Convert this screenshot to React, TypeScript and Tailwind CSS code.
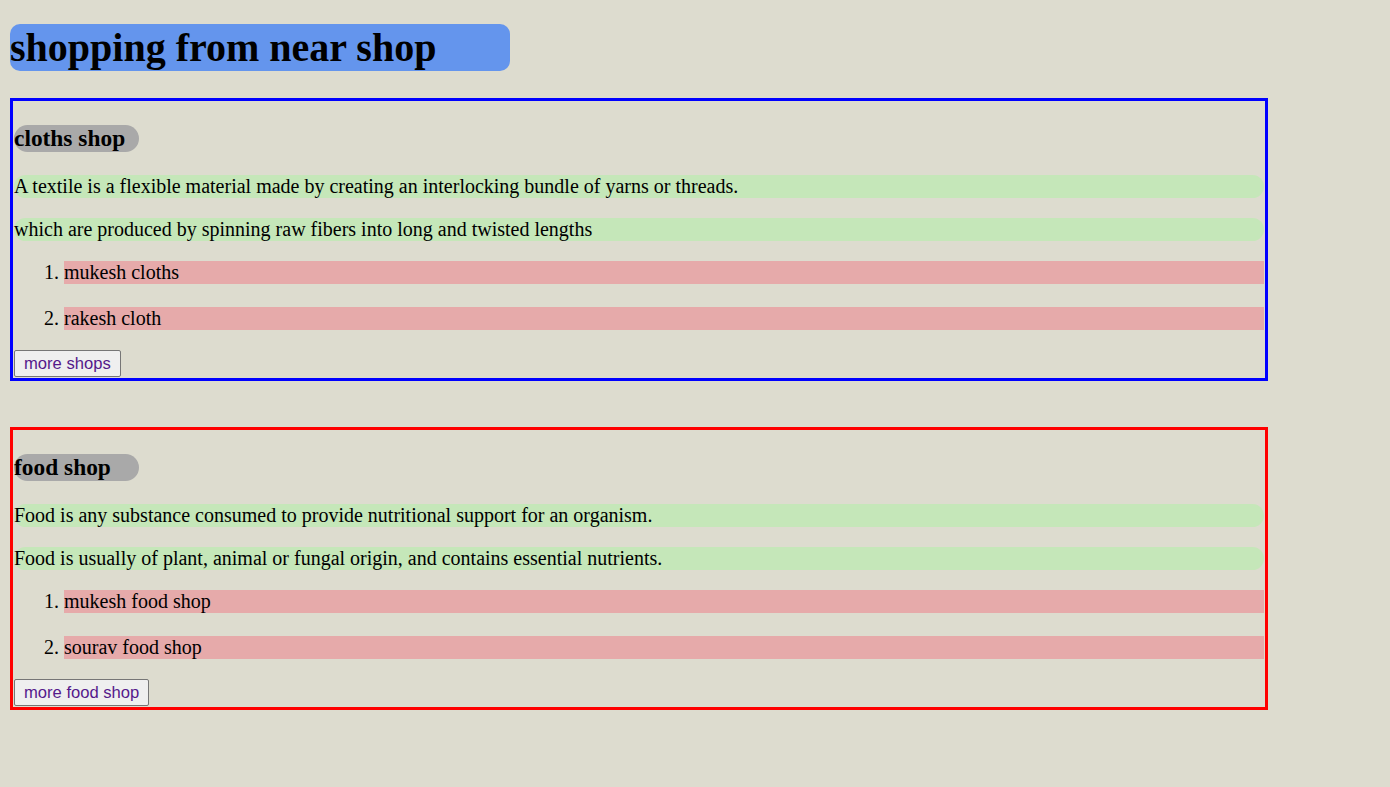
import { FC } from "react";

type TShop = {
  title: string;
  lines: string[];
  shops: string[];
  more: string;
  border: string;
};

const shops: TShop[] = [
  {
    title: "cloths shop",
    lines: [
      "A textile is a flexible material made by creating an interlocking bundle of yarns or threads.",
      "which are produced by spinning raw fibers into long and twisted lengths",
    ],
    shops: ["mukesh cloths", "rakesh cloth"],
    more: "more shops",
    border: "border-[#0000ff]",
  },
  {
    title: "food shop",
    lines: [
      "Food is any substance consumed to provide nutritional support for an organism.",
      "Food is usually of plant, animal or fungal origin, and contains essential nutrients.",
    ],
    shops: ["mukesh food shop", "sourav food shop"],
    more: "more food shop",
    border: "border-[#ff0000]",
  },
];

const ShopBox: FC<{ shop: TShop; first?: boolean }> = ({ shop, first }) => {
  return (
    <section
      className={`w-[1258px] border-[3px] ${shop.border} p-[1px] flex flex-col ${
        first ? "" : "mt-[46px]"
      }`}
    >
      <h3 className="mt-[23px] w-[125px] h-[27px] rounded-full bg-[#a9a9a9] text-[23.4px] leading-[27px] font-bold">
        {shop.title}
      </h3>

      <p className="mt-[23px] h-[23px] leading-[23px] rounded-full bg-[#c5e7b9]">
        {shop.lines[0]}
      </p>
      <p className="mt-[20px] h-[23px] leading-[23px] rounded-full bg-[#c5e7b9]">
        {shop.lines[1]}
      </p>

      <ol className="list-decimal pl-[50px] mt-[20px] flex flex-col gap-[23px]">
        {shop.shops.map((name) => (
          <li key={name} className="h-[23px] leading-[23px] bg-[#e6aaaa]">
            {name}
          </li>
        ))}
      </ol>

      <button
        type="button"
        className="self-start mt-[20px] h-[27px] px-[9px] bg-[#efefef] border border-[#767676] rounded-[2px] text-[16.6px] leading-[19px] text-[#551a8b] font-['Liberation_Sans',Arial,sans-serif]"
      >
        {shop.more}
      </button>
    </section>
  );
};

const App: FC = () => {
  return (
    <div className="min-h-screen bg-[#dddccf] px-[10px] pt-[24px] pb-[20px] text-black text-[20px] font-['Liberation_Serif','Times_New_Roman',serif]">
      <h1 className="w-[500px] h-[47px] rounded-[10px] bg-[#6495ed] text-[40px] leading-[47px] font-bold mb-[27px]">
        shopping from near shop
      </h1>

      {shops.map((shop, i) => (
        <ShopBox key={shop.title} shop={shop} first={i === 0} />
      ))}
    </div>
  );
};

export default App;
